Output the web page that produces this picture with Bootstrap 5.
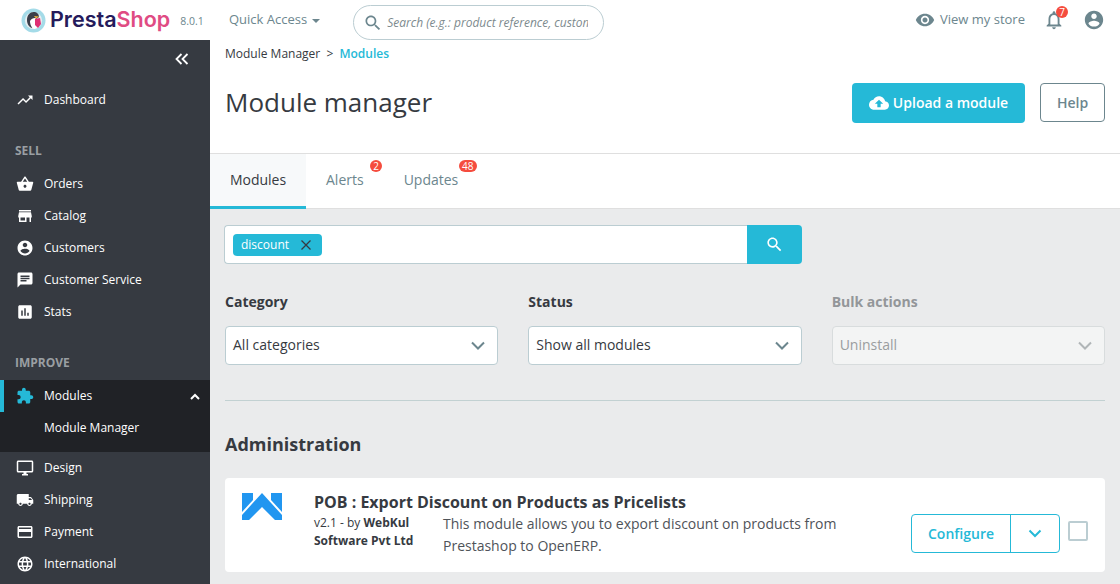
<!DOCTYPE html>
<html lang="en">
<head>
  <meta charset="UTF-8">
  <title>Module manager</title>
  <link href="https://cdn.jsdelivr.net/npm/bootstrap@5.3.3/dist/css/bootstrap.min.css" rel="stylesheet">
  <style>
    html, body { height: 584px; overflow: hidden; }
    body { font-family: "Open Sans", "Liberation Sans", sans-serif; font-size: 14px; color: #363a41; background: #eaebec; }
    svg { display: block; fill: currentColor; flex-shrink: 0; }
    .top-bar { height: 40px; background: #fff; }
    .logo-box { width: 229px; padding-left: 21px; flex-shrink: 0; }
    .logo-word { font-family: Inter, "Liberation Sans", sans-serif; font-weight: 600; font-size: 21.5px; line-height: 1; color: #251b5b; margin-left: 4px; }
    .logo-word span { color: #e04b83; }
    .logo-ver { font-size: 10.5px; color: #6c868e; margin-left: 10px; margin-top: 3px; }
    .quick-link { font-size: 13px; color: #6c868e; }
    .caret-down { border: 4.5px solid transparent; border-top-color: #6c868e; border-bottom: 0; margin-left: 5px; margin-top: 2px; }
    .top-search { width: 251px; height: 35px; margin-left: 33px; margin-top: 5px; border: 1px solid #bbcdd2; border-radius: 18px; padding: 0 15px 0 9px; color: #6c868e; align-self: flex-start; }
    .top-search em { font-size: 12px; color: #7d8a8e; white-space: nowrap; overflow: hidden; }
    .store-link { font-size: 13px; color: #6c868e; gap: 5px; }
    .top-icon { color: #6c868e; }
    .dot-badge { position: absolute; background: #f54c3e; color: #fff; border-radius: 10px; font-size: 10px; line-height: 12px; height: 12px; min-width: 12px; text-align: center; padding: 0 2px; }
    .side-nav { width: 210px; height: 544px; background: #363a41; color: #fff; flex-shrink: 0; overflow: hidden; }
    .collapse-row { height: 44px; padding: 13px 21px 0 0; }
    .side-item { height: 32px; padding-left: 16px; font-size: 12px; color: #fff; gap: 10px; }
    .side-item svg { width: 18px; height: 18px; }
    .side-label { font-size: 12px; font-weight: 700; color: #9a9fa3; padding-left: 15px; line-height: 16px; }
    .side-active { background: #202226; height: 72px; margin-top: 2px; }
    .side-active .side-item:first-child { border-left: 4px solid #25b9d7; padding-left: 12px; }
    .side-active .side-item:first-child svg:first-child { color: #25b9d7; }
    .main-pane { min-width: 0; }
    .page-head { height: 114px; background: #fff; padding: 0 15px; border-bottom: 1px solid #dfdfdf; }
    .crumbs { font-size: 12px; line-height: 16px; padding-top: 6px; height: 30px; }
    .crumbs b { color: #25b9d7; font-weight: 600; margin-left: 3px; }
    .page-title { font-size: 26px; font-weight: 400; line-height: 36px; margin: 0; color: #363a41; }
    .btn-upload { background: #25b9d7; color: #fff; font-weight: 600; font-size: 14px; height: 40px; width: 173px; border: 0; border-radius: 4px; gap: 4px; padding: 0 0 1px; }
    .btn-help { height: 39px; width: 65px; border: 1px solid #6c868e; border-radius: 4px; background: #fff; color: #6c868e; font-weight: 600; font-size: 14px; padding: 0 0 1px; }
    .tab-bar { height: 55px; background: #fff; border-bottom: 1px solid #dfdfdf; }
    .tab-link { height: 55px; padding: 0 20px 4px; font-size: 14px; color: #6c868e; position: relative; }
    .tab-on { background: #f7f9fa; color: #363a41; border-bottom: 3px solid #25b9d7; width: 96px; padding-bottom: 1px; }
    .work-area { padding: 16px 15px 0 15px; }
    .tag-search { width: 578px; height: 39px; margin-left: -1px; }
    .tag-field { background: #fff; border: 1px solid #bbcdd2; border-right: 0; border-radius: 4px 0 0 4px; padding-left: 8px; }
    .tag-chip { height: 22px; background: #25b9d7; color: #fff; border-radius: 4px; font-size: 12px; padding: 0 11px 0 8px; gap: 12px; }
    .tag-chip svg { color: #363a41; }
    .tag-btn { width: 55px; background: #25b9d7; color: #fff; border-radius: 0 4px 4px 0; }
    .filter-row { margin-top: 29px; gap: 30px; }
    .filter-col { flex: 1 1 0; }
    .filter-col label { display: block; font-weight: 700; font-size: 14px; line-height: 18px; margin-bottom: 15px; }
    .fake-select { height: 39px; background: #fff; border: 1px solid #bbcdd2; border-radius: 4px; padding: 0 12px 2px 7px; font-size: 14px; color: #363a41; }
    .filter-off label { color: #939699; }
    .filter-off .fake-select { background: #f3f4f4; border-color: #d8dcdd; color: #9a9d9f; }
    .filter-off .fake-select svg { color: #b0b5b7; }
    .fake-select svg { color: #6c868e; margin-top: 2px; }
    .split-line { border-top: 1px solid #c2d1d2; margin-top: 35px; }
    .group-title { font-size: 18px; font-weight: 700; line-height: 24px; margin: 31px 0 22px; }
    .module-box { height: 94px; background: #fff; border-radius: 4px; padding: 14px 17px 0 16px; }
    .module-logo { width: 73px; }
    .module-name { font-size: 16px; font-weight: 700; line-height: 20px; }
    .module-by { width: 129px; font-size: 12px; line-height: 18px; margin-top: 2px; }
    .module-by b { font-weight: 700; }
    .module-text { width: 420px; font-size: 14px; line-height: 21.5px; color: #4f5359; margin-top: 1px; }
    .conf-group { width: 149px; height: 39px; border: 1px solid #25b9d7; border-radius: 4px; color: #25b9d7; font-weight: 600; font-size: 14px; margin-top: 29px; }
    .conf-main { width: 99px; border-right: 1px solid #25b9d7; }
    .conf-arrow { flex: 1; }
    .pick-box { width: 20px; height: 20px; border: 2px solid #bbcdd2; border-radius: 2px; margin: 36px 0 0 8px; }
  </style>
</head>
<body>

  <div class="top-bar d-flex align-items-center">
    <div class="logo-box d-flex align-items-center">
      <svg width="25" height="25" viewBox="0 0 25 25">
        <circle cx="12.5" cy="12.5" r="12" fill="#a4dbe8"/>
        <circle cx="12.5" cy="12.5" r="8.6" fill="#e8eef0"/>
        <path d="M6 12c0-5 3-8 6.5-8S18 6 18 9l-4 3-3 8c-3-1-5-4-5-8z" fill="#3b3f4a"/>
        <path d="M9 13c1-2 3-3 5-3l3 2 1 5-4 4c-3 0-5-4-5-8z" fill="#fff"/>
        <path d="M14 11l5-1 1 6-3 4-3-3z" fill="#df2f73"/>
        <path d="M13 8l5 .5-3 2z" fill="#f5b33c"/>
      </svg>
      <div class="logo-word">Presta<span>Shop</span></div>
      <div class="logo-ver">8.0.1</div>
    </div>
    <div class="d-flex align-items-center quick-link"><span>Quick Access</span><span class="caret-down"></span></div>
    <div class="top-search d-flex align-items-center gap-1">
      <svg width="20" height="20" viewBox="0 0 24 24"><path d="M15.5 14h-.79l-.28-.27C15.41 12.59 16 11.11 16 9.5 16 5.91 13.09 3 9.5 3S3 5.91 3 9.5 5.91 16 9.5 16c1.61 0 3.09-.59 4.23-1.57l.27.28v.79l5 4.99L20.49 19l-4.99-5zm-6 0C7.01 14 5 11.99 5 9.5S7.01 5 9.5 5 14 7.01 14 9.5 11.99 14 9.5 14z"/></svg>
      <em>Search (e.g.: product reference, custom</em>
    </div>
    <div class="ms-auto d-flex align-items-center store-link">
      <svg class="top-icon" width="20" height="20" viewBox="0 0 24 24"><path d="M12 4.5C7 4.5 2.73 7.61 1 12c1.73 4.39 6 7.5 11 7.5s9.27-3.11 11-7.5c-1.73-4.39-6-7.5-11-7.5zM12 17c-2.76 0-5-2.24-5-5s2.24-5 5-5 5 2.24 5 5-2.24 5-5 5zm0-8c-1.66 0-3 1.34-3 3s1.34 3 3 3 3-1.34 3-3-1.34-3-3-3z"/></svg>
      <span>View my store</span>
    </div>
    <div class="position-relative" style="margin-left:18px">
      <svg class="top-icon" width="22" height="22" viewBox="0 0 24 24"><path d="M12 22c1.1 0 2-.9 2-2h-4c0 1.1.9 2 2 2zm6-6v-5c0-3.07-1.63-5.64-4.5-6.32V4c0-.83-.67-1.5-1.5-1.5s-1.5.67-1.5 1.5v.68C7.64 5.36 6 7.92 6 11v5l-2 2v1h16v-1l-2-2zm-2 1H8v-6c0-2.48 1.51-4.5 4-4.5s4 2.02 4 4.5v6z"/></svg>
      <span class="dot-badge" style="top:-3px;left:13px">7</span>
    </div>
    <div style="margin:0 15px 0 18px">
      <svg class="top-icon" width="22" height="22" viewBox="0 0 24 24"><path d="M12 2C6.48 2 2 6.48 2 12s4.48 10 10 10 10-4.48 10-10S17.52 2 12 2zm0 3c1.66 0 3 1.34 3 3s-1.34 3-3 3-3-1.34-3-3 1.34-3 3-3zm0 14.2c-2.5 0-4.71-1.28-6-3.22.03-1.99 4-3.08 6-3.08 1.99 0 5.97 1.09 6 3.08-1.29 1.94-3.5 3.22-6 3.22z"/></svg>
    </div>
  </div>

  <div class="d-flex">
    <nav class="side-nav">
      <div class="collapse-row d-flex justify-content-end">
        <svg width="14" height="12" viewBox="0 0 14 12" style="fill:none;stroke:#fff;stroke-width:1.8"><path d="M6.5 1 1.5 6l5 5M12.5 1l-5 5 5 5"/></svg>
      </div>
      <div class="side-item d-flex align-items-center">
        <svg viewBox="0 0 24 24"><path d="M16 6l2.29 2.29-4.88 4.88-4-4L2 16.59 3.41 18l6-6 4 4 6.3-6.29L22 12V6z"/></svg>Dashboard
      </div>
      <div class="side-label" style="margin-top:27px;margin-bottom:9px">SELL</div>
      <div class="side-item d-flex align-items-center">
        <svg viewBox="0 0 24 24"><path d="M17.21 9l-4.38-6.56c-.19-.28-.51-.42-.83-.42-.32 0-.64.14-.83.43L6.79 9H2c-.55 0-1 .45-1 1 0 .09.01.18.04.27l2.54 9.27c.23.84 1 1.46 1.92 1.46h13c.92 0 1.69-.62 1.93-1.46l2.54-9.27L23 10c0-.55-.45-1-1-1h-4.79zM9 9l3-4.4L15 9H9zm3 8c-1.1 0-2-.9-2-2s.9-2 2-2 2 .9 2 2-.9 2-2 2z"/></svg>Orders
      </div>
      <div class="side-item d-flex align-items-center">
        <svg viewBox="0 0 24 24"><path d="M20 4H4v2h16V4zm1 10v-2l-1-5H4l-1 5v2h1v6h10v-6h4v6h2v-6h1zm-9 4H6v-4h6v4z"/></svg>Catalog
      </div>
      <div class="side-item d-flex align-items-center">
        <svg viewBox="0 0 24 24"><path d="M12 2C6.48 2 2 6.48 2 12s4.48 10 10 10 10-4.48 10-10S17.52 2 12 2zm0 3c1.66 0 3 1.34 3 3s-1.34 3-3 3-3-1.34-3-3 1.34-3 3-3zm0 14.2c-2.5 0-4.71-1.28-6-3.22.03-1.99 4-3.08 6-3.08 1.99 0 5.97 1.09 6 3.08-1.29 1.94-3.5 3.22-6 3.22z"/></svg>Customers
      </div>
      <div class="side-item d-flex align-items-center">
        <svg viewBox="0 0 24 24"><path d="M20 2H4c-1.1 0-1.99.9-1.99 2L2 22l4-4h14c1.1 0 2-.9 2-2V4c0-1.1-.9-2-2-2zM6 9h12v2H6V9zm8 5H6v-2h8v2zm4-6H6V6h12v2z"/></svg>Customer Service
      </div>
      <div class="side-item d-flex align-items-center">
        <svg viewBox="0 0 24 24"><path d="M19 3H5c-1.1 0-2 .9-2 2v14c0 1.1.9 2 2 2h14c1.1 0 2-.9 2-2V5c0-1.1-.9-2-2-2zM9 17H7v-7h2v7zm4 0h-2V7h2v10zm4 0h-2v-4h2v4z"/></svg>Stats
      </div>
      <div class="side-label" style="margin-top:27px;margin-bottom:9px">IMPROVE</div>
      <div class="side-active">
        <div class="side-item d-flex align-items-center">
          <svg viewBox="0 0 24 24"><path d="M20.5 11H19V7c0-1.1-.9-2-2-2h-4V3.5C13 2.12 11.88 1 10.5 1S8 2.12 8 3.5V5H4c-1.1 0-1.99.9-1.99 2v3.8H3.5c1.49 0 2.7 1.21 2.7 2.7s-1.21 2.7-2.7 2.7H2V20c0 1.1.9 2 2 2h3.8v-1.5c0-1.49 1.21-2.7 2.7-2.7 1.49 0 2.7 1.21 2.7 2.7V22H17c1.1 0 2-.9 2-2v-4h1.5c1.38 0 2.5-1.12 2.5-2.5S21.88 11 20.5 11z"/></svg>Modules
          <svg class="ms-auto" style="width:10px;height:7px;margin-right:10px;fill:none;stroke:#fff;stroke-width:2" viewBox="0 0 10 7"><path d="M1 6l4-4 4 4"/></svg>
        </div>
        <div class="side-item d-flex align-items-center" style="padding-left:44px">Module Manager</div>
      </div>
      <div class="side-item d-flex align-items-center">
        <svg viewBox="0 0 24 24"><path d="M21 2H3c-1.1 0-2 .9-2 2v12c0 1.1.9 2 2 2h7v2H8v2h8v-2h-2v-2h7c1.1 0 2-.9 2-2V4c0-1.1-.9-2-2-2zm0 14H3V4h18v12z"/></svg>Design
      </div>
      <div class="side-item d-flex align-items-center">
        <svg viewBox="0 0 24 24"><path d="M20 8h-3V4H3c-1.1 0-2 .9-2 2v11h2c0 1.66 1.34 3 3 3s3-1.34 3-3h6c0 1.66 1.34 3 3 3s3-1.34 3-3h2v-5l-3-4zM6 18.5c-.83 0-1.5-.67-1.5-1.5s.67-1.5 1.5-1.5 1.5.67 1.5 1.5-.67 1.5-1.5 1.5zm13.5-9l1.96 2.5H17V9.5h2.5zm-1.5 9c-.83 0-1.5-.67-1.5-1.5s.67-1.5 1.5-1.5 1.5.67 1.5 1.5-.67 1.5-1.5 1.5z"/></svg>Shipping
      </div>
      <div class="side-item d-flex align-items-center">
        <svg viewBox="0 0 24 24"><path d="M20 4H4c-1.11 0-1.99.89-1.99 2L2 18c0 1.11.89 2 2 2h16c1.11 0 2-.89 2-2V6c0-1.11-.89-2-2-2zm0 14H4v-6h16v6zm0-10H4V6h16v2z"/></svg>Payment
      </div>
      <div class="side-item d-flex align-items-center">
        <svg viewBox="0 0 24 24"><path d="M11.99 2C6.47 2 2 6.48 2 12s4.47 10 9.99 10C17.52 22 22 17.52 22 12S17.52 2 11.99 2zm6.93 6h-2.95c-.32-1.25-.78-2.45-1.38-3.56 1.84.63 3.37 1.91 4.33 3.56zM12 4.04c.83 1.2 1.48 2.53 1.91 3.96h-3.82c.43-1.43 1.08-2.76 1.91-3.96zM4.26 14C4.1 13.36 4 12.69 4 12s.1-1.36.26-2h3.38c-.08.66-.14 1.32-.14 2 0 .68.06 1.34.14 2H4.26zm.82 2h2.95c.32 1.25.78 2.45 1.38 3.56-1.84-.63-3.37-1.9-4.33-3.56zm2.95-8H5.08c.96-1.66 2.49-2.93 4.33-3.56C8.81 5.55 8.35 6.75 8.03 8zM12 19.96c-.83-1.2-1.48-2.53-1.91-3.96h3.82c-.43 1.43-1.08 2.76-1.91 3.96zM14.34 14H9.66c-.09-.66-.16-1.32-.16-2 0-.68.07-1.35.16-2h4.68c.09.65.16 1.32.16 2 0 .68-.07 1.34-.16 2zm.25 5.56c.6-1.11 1.06-2.31 1.38-3.56h2.95c-.96 1.65-2.49 2.93-4.33 3.56zM16.36 14c.08-.66.14-1.32.14-2 0-.68-.06-1.34-.14-2h3.38c.16.64.26 1.31.26 2s-.1 1.36-.26 2h-3.38z"/></svg>International
      </div>
    </nav>

    <div class="main-pane flex-grow-1">
      <div class="page-head">
        <div class="crumbs">Module Manager &nbsp;&gt; <b>Modules</b></div>
        <div class="d-flex align-items-start justify-content-between" style="margin-top:-2px">
          <h1 class="page-title" style="margin-top:16px">Module manager</h1>
          <div class="d-flex align-items-start" style="margin-top:15px;gap:15px">
            <button class="btn-upload d-flex align-items-center justify-content-center">
              <svg width="20" height="20" viewBox="0 0 24 24"><path d="M19.35 10.04C18.67 6.59 15.64 4 12 4 9.11 4 6.6 5.64 5.35 8.04 2.34 8.36 0 10.91 0 14c0 3.31 2.69 6 6 6h13c2.76 0 5-2.24 5-5 0-2.64-2.05-4.78-4.65-4.96zM14 13v4h-4v-4H7l5-5 5 5h-3z"/></svg>
              Upload a module
            </button>
            <button class="btn-help">Help</button>
          </div>
        </div>
      </div>

      <div class="tab-bar d-flex">
        <div class="tab-link tab-on d-flex align-items-center justify-content-center">Modules</div>
        <div class="tab-link d-flex align-items-center">Alerts<span class="dot-badge" style="top:6px;left:64px">2</span></div>
        <div class="tab-link d-flex align-items-center">Updates<span class="dot-badge" style="top:6px;left:75px;width:18px">48</span></div>
      </div>

      <div class="work-area">
        <div class="tag-search d-flex">
          <div class="tag-field flex-grow-1 d-flex align-items-center">
            <div class="tag-chip d-flex align-items-center">discount
              <svg width="10" height="10" viewBox="0 0 10 10" style="fill:none;stroke:currentColor;stroke-width:1.3"><path d="M.5.5l9 9M9.5.5l-9 9"/></svg>
            </div>
          </div>
          <div class="tag-btn d-flex align-items-center justify-content-center">
            <svg width="19" height="19" viewBox="0 0 24 24"><path d="M15.5 14h-.79l-.28-.27C15.41 12.59 16 11.11 16 9.5 16 5.91 13.09 3 9.5 3S3 5.91 3 9.5 5.91 16 9.5 16c1.61 0 3.09-.59 4.23-1.57l.27.28v.79l5 4.99L20.49 19l-4.99-5zm-6 0C7.01 14 5 11.99 5 9.5S7.01 5 9.5 5 14 7.01 14 9.5 11.99 14 9.5 14z"/></svg>
          </div>
        </div>

        <div class="filter-row d-flex">
          <div class="filter-col">
            <label>Category</label>
            <div class="fake-select d-flex align-items-center justify-content-between">All categories
              <svg width="14" height="9" viewBox="0 0 14 9" style="fill:none;stroke:currentColor;stroke-width:2"><path d="M1 1.5l6 6 6-6"/></svg>
            </div>
          </div>
          <div class="filter-col">
            <label>Status</label>
            <div class="fake-select d-flex align-items-center justify-content-between">Show all modules
              <svg width="14" height="9" viewBox="0 0 14 9" style="fill:none;stroke:currentColor;stroke-width:2"><path d="M1 1.5l6 6 6-6"/></svg>
            </div>
          </div>
          <div class="filter-col filter-off">
            <label>Bulk actions</label>
            <div class="fake-select d-flex align-items-center justify-content-between">Uninstall
              <svg width="14" height="9" viewBox="0 0 14 9" style="fill:none;stroke:currentColor;stroke-width:2"><path d="M1 1.5l6 6 6-6"/></svg>
            </div>
          </div>
        </div>

        <div class="split-line"></div>
        <h2 class="group-title">Administration</h2>

        <div class="module-box d-flex">
          <div class="module-logo">
            <svg width="40" height="27" viewBox="0 0 40 27" style="margin:1px 0 0 1px">
              <path d="M0 0H11V7L0 19zM29 0H40V19L29 7zM20 0 40 22V27H33L20 14 7 27H0V22z" fill="#2196f0"/>
            </svg>
          </div>
          <div class="flex-grow-1">
            <div class="module-name">POB : Export Discount on Products as Pricelists</div>
            <div class="d-flex">
              <div class="module-by">v2.1 - by <b>WebKul Software Pvt Ltd</b></div>
              <div class="module-text">This module allows you to export discount on products from Prestashop to OpenERP.</div>
            </div>
          </div>
          <div class="d-flex align-items-start" style="margin-top:-14px;padding-top:7px">
            <div class="conf-group d-flex">
              <div class="conf-main d-flex align-items-center justify-content-center">Configure</div>
              <div class="conf-arrow d-flex align-items-center justify-content-center">
                <svg width="14" height="9" viewBox="0 0 14 9" style="fill:none;stroke:currentColor;stroke-width:2"><path d="M1.5 1.5l5.5 5.5 5.5-5.5"/></svg>
              </div>
            </div>
            <div class="pick-box"></div>
          </div>
        </div>
      </div>
    </div>
  </div>

</body>
</html>
